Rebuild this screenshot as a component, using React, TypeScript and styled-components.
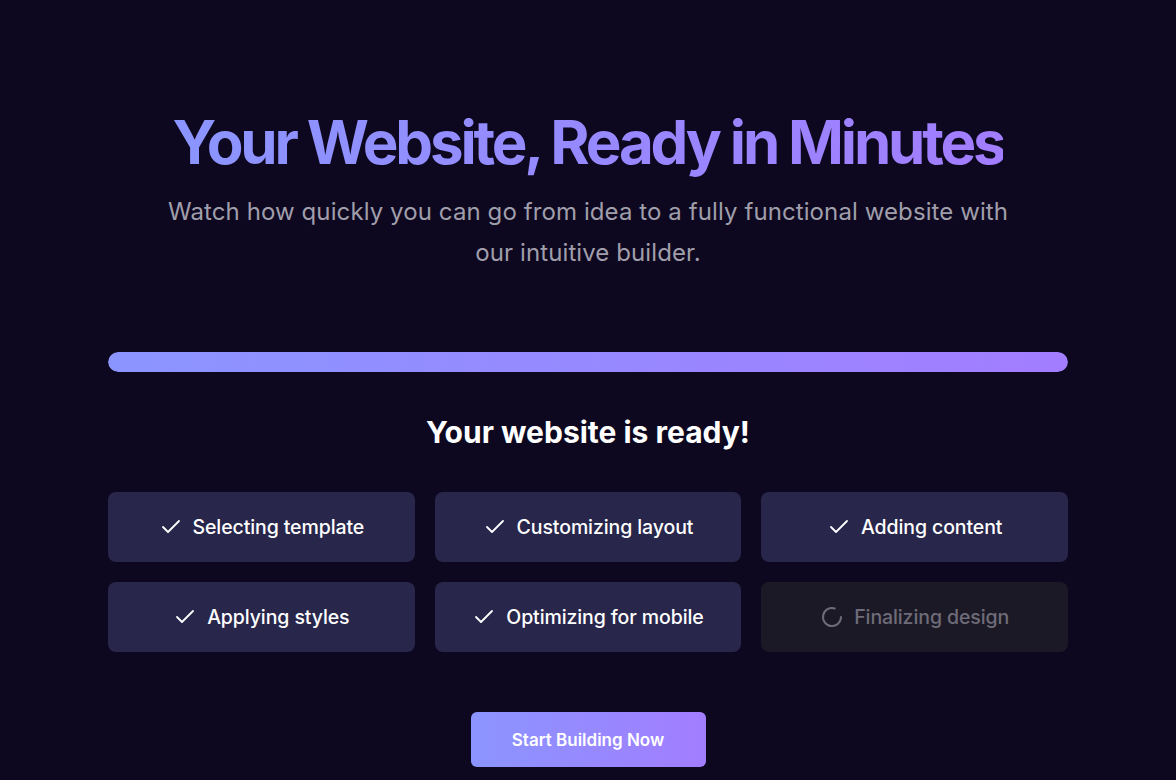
import React from "react";
import styled, { createGlobalStyle } from "styled-components";

const Global = createGlobalStyle`
  html, body { margin: 0; padding: 0; background: #0d0820; }
  body { font-family: Inter, "Noto Sans", sans-serif; color: #fff; }
  * { box-sizing: border-box; }
`;

const Page = styled.main`
  min-height: 780px;
  background: #0d0820;
  display: flex;
  flex-direction: column;
  align-items: center;
  padding-top: 105px;
`;

const Title = styled.h1`
  margin: 0;
  font-size: 60px;
  line-height: 74px;
  font-weight: 700;
  letter-spacing: -0.053em;
  background: linear-gradient(90deg, #8b95ff 0%, #a27dff 100%);
  -webkit-background-clip: text;
  background-clip: text;
  color: transparent;
  text-align: center;
`;

const Subtitle = styled.p`
  margin: 12px 0 0;
  max-width: 852px;
  font-size: 24px;
  line-height: 41px;
  color: #a09eab;
  text-align: center;
  letter-spacing: 0.004em;
`;

const Container = styled.section`
  width: 960px;
  display: flex;
  flex-direction: column;
  align-items: center;
  margin-top: 79px;
`;

const Track = styled.div`
  width: 100%;
  height: 20px;
  border-radius: 10px;
  background: #26223f;
  overflow: hidden;
`;

const Fill = styled.div`
  height: 100%;
  border-radius: 10px;
  background: linear-gradient(90deg, #8b95ff 0%, #a27dff 100%);
`;

const Status = styled.h2`
  margin: 42px 0 0;
  font-size: 30px;
  line-height: 36px;
  font-weight: 700;
  color: #ffffff;
  letter-spacing: 0;
`;

const Grid = styled.div`
  margin-top: 42px;
  width: 100%;
  display: grid;
  grid-template-columns: repeat(3, 1fr);
  gap: 20px;
`;

const Step = styled.div<{ $done: boolean }>`
  height: 70px;
  border-radius: 8px;
  background: ${(p) => (p.$done ? "#28264b" : "#1c1926")};
  color: ${(p) => (p.$done ? "#ffffff" : "#6e6c78")};
  display: flex;
  align-items: center;
  justify-content: center;
  gap: 10px;
  font-size: 19.5px;
  font-weight: 500;
  letter-spacing: -0.005em;
`;

const Button = styled.button`
  margin-top: 60px;
  width: 235px;
  height: 55px;
  border: none;
  border-radius: 6px;
  background: linear-gradient(90deg, #8b95ff 0%, #a27dff 100%);
  color: #fff;
  font-family: Inter, "Noto Sans", sans-serif;
  font-size: 17px;
  font-weight: 600;
  cursor: pointer;
`;

const Check = () => (
  <svg width="24" height="24" viewBox="0 0 24 24" fill="none" stroke="currentColor" strokeWidth="1.8" strokeLinecap="round" strokeLinejoin="round">
    <path d="M20 6 9 17l-5-5" />
  </svg>
);

const Spinner = () => (
  <svg width="24" height="24" viewBox="0 0 24 24" fill="none" stroke="#6e6c78" strokeWidth="2" strokeLinecap="round">
    <path d="M21 12a9 9 0 1 1-6.219-8.56" />
  </svg>
);

const steps = [
  { label: "Selecting template", done: true },
  { label: "Customizing layout", done: true },
  { label: "Adding content", done: true },
  { label: "Applying styles", done: true },
  { label: "Optimizing for mobile", done: true },
  { label: "Finalizing design", done: false },
];

export default function App() {
  return (
    <>
      <Global />
      <Page>
        <Title>Your Website, Ready in Minutes</Title>
        <Subtitle>
          Watch how quickly you can go from idea to a fully functional website with our intuitive builder.
        </Subtitle>
        <Container>
          <Track>
            <Fill style={{ width: "100%" }} />
          </Track>
          <Status>Your website is ready!</Status>
          <Grid>
            {steps.map((s) => (
              <Step key={s.label} $done={s.done}>
                {s.done ? <Check /> : <Spinner />}
                <span>{s.label}</span>
              </Step>
            ))}
          </Grid>
          <Button>Start Building Now</Button>
        </Container>
      </Page>
    </>
  );
}
